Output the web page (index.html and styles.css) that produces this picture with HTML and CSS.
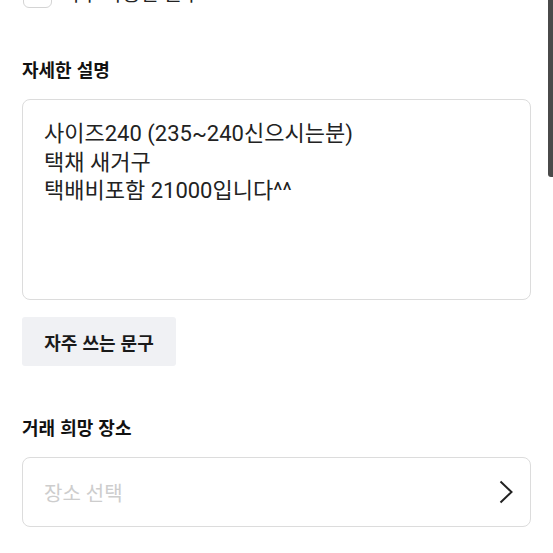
FILE: index.html
```html
<!DOCTYPE html>
<html lang="ko">
<head>
<meta charset="utf-8">
<link rel="stylesheet" href="styles.css">
</head>
<body>
<div class="page">
  <label class="check-row">
    <span class="checkbox"></span>
    <span class="check-label">자주 사용한 문구</span>
  </label>

  <h2 class="section-title first">자세한 설명</h2>
  <div class="textarea">
    <div>사이즈240 (235~240신으시는분)</div>
    <div>택채 새거구</div>
    <div>택배비포함 21000입니다^^</div>
  </div>
  <button class="phrase-btn">자주 쓰는 문구</button>

  <h2 class="section-title second">거래 희망 장소</h2>
  <div class="select">
    <span class="placeholder">장소 선택</span>
    <svg class="chev" width="14" height="24" viewBox="0 0 14 24"><path d="M1.5 1.5 L12.5 12 L1.5 22.5" fill="none" stroke="#222" stroke-width="2"/></svg>
  </div>
</div>
<div class="scrollbar"></div>
</body>
</html>
```
FILE: styles.css
```css
html, body {
  margin: 0;
  padding: 0;
  background: #fff;
  overflow: hidden;
}
body {
  font-family: Roboto, "Noto Sans CJK KR", sans-serif;
  color: #222;
  width: 553px;
  height: 553px;
  position: relative;
}
.page {
  padding: 0 22px;
}
.check-row {
  display: flex;
  align-items: center;
  gap: 10px;
  height: 30px;
  margin-top: -21px;
  padding-left: 1px;
}
.checkbox {
  width: 29px;
  height: 28px;
  border: 1.5px solid #d4d4d4;
  border-radius: 6px;
  box-sizing: border-box;
}
.check-label {
  font-size: 20px;
  line-height: 28px;
  color: #222;
}
.section-title {
  margin: 0;
  font-family: "Noto Sans CJK KR", sans-serif;
  font-size: 18px;
  font-weight: 700;
  color: #111;
  line-height: 26px;
}
.section-title.first {
  margin-top: 47px;
}
.textarea {
  margin-top: 17px;
  height: 201px;
  box-sizing: border-box;
  border: 1px solid #dcdcdc;
  border-radius: 8px;
  padding: 20px 21px;
  font-size: 22px;
  line-height: 28.5px;
  color: #222;
}
.phrase-btn {
  margin-top: 17px;
  width: 154px;
  height: 49px;
  border: none;
  border-radius: 3px;
  background: #f0f1f4;
  font-family: "Noto Sans CJK KR", sans-serif;
  font-size: 18px;
  font-weight: 700;
  color: #1a1a1a;
  padding: 0;
  display: block;
}
.section-title.second {
  margin-top: 48px;
}
.select {
  margin-top: 17px;
  height: 70px;
  box-sizing: border-box;
  border: 1px solid #dcdcdc;
  border-radius: 8px;
  display: flex;
  align-items: center;
  justify-content: space-between;
  padding: 0 17px 0 21px;
}
.placeholder {
  font-size: 20px;
  color: #cdcdcd;
}
.chev {
  display: block;
}
.scrollbar {
  position: absolute;
  top: 0;
  right: 0;
  width: 5px;
  height: 177px;
  background: #4a4a4a;
  border-radius: 0 0 0 3px;
}
```
